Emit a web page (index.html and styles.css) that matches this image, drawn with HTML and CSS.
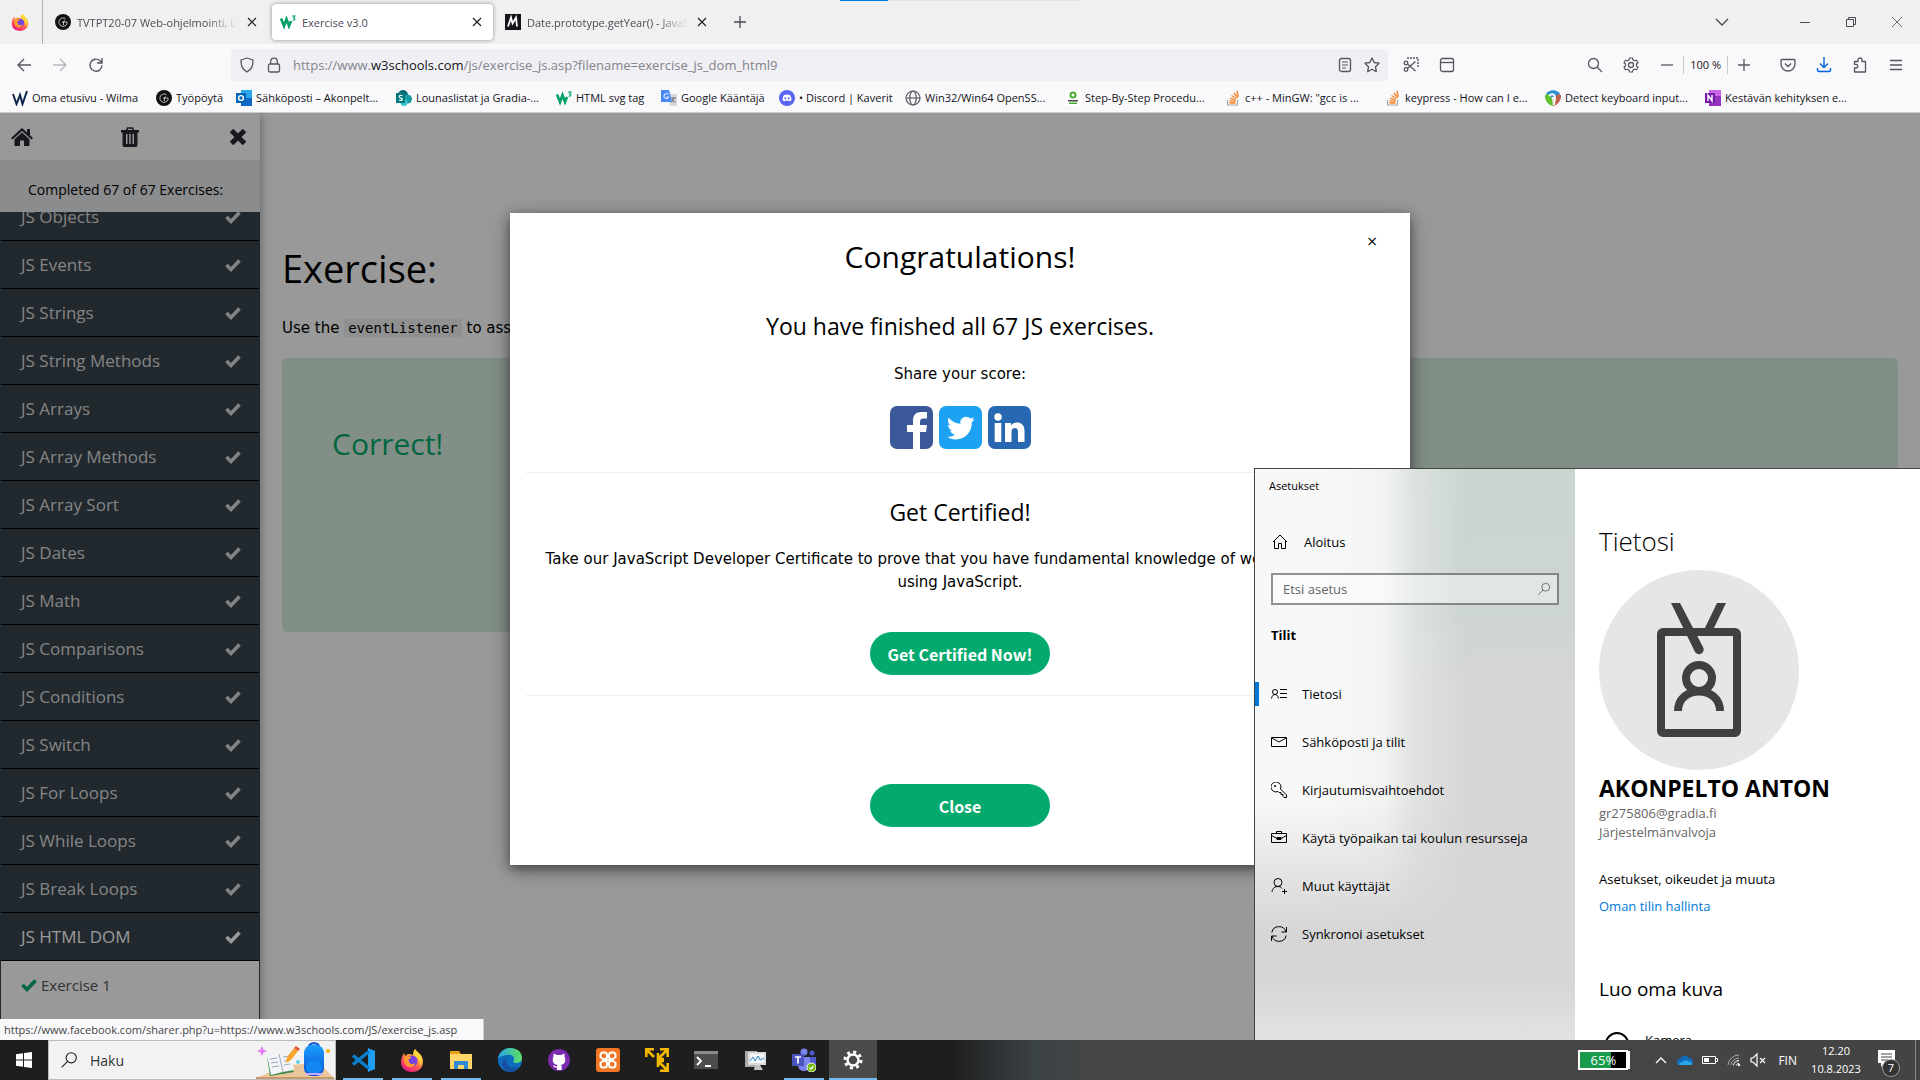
FILE: index.html
```html
<!DOCTYPE html>
<html lang="fi">
<head>
<meta charset="utf-8">
<meta name="viewport" content="width=device-width, initial-scale=1">
<title>Exercise v3.0</title>
<link rel="stylesheet" href="styles.css">
</head>
<body>
<svg class="sprite" aria-hidden="true">
  <defs>
    <linearGradient id="fx-body" x1="0.8" y1="0" x2="0.2" y2="1"><stop offset="0" stop-color="#fff044"/><stop offset=".35" stop-color="#ffa436"/><stop offset=".65" stop-color="#ff4f5e"/><stop offset="1" stop-color="#e31587"/></linearGradient>
    <linearGradient id="edge-a" x1="0" y1="0" x2="1" y2="0"><stop offset="0" stop-color="#2aa7e8"/><stop offset="1" stop-color="#5fe05f"/></linearGradient>
    <linearGradient id="bag" x1="0" y1="0" x2="0" y2="1"><stop offset="0" stop-color="#1aa0ff"/><stop offset="1" stop-color="#0b4fd0"/></linearGradient>
    <symbol id="firefox" viewBox="0 0 24 24">
      <path fill="url(#fx-body)" d="M15 1c1 2 5 4 7 8 3 7-1 15-10 15S-1 17 2 9c.6-2 1.500-3 2-4l1.500 3C6.500 6.500 8 6 9 6c2 0 3 1 4 1 0-2 .6-4 2-6Z"/>
      <circle cx="12" cy="13" r="5.500" fill="#7542e5"/>
      <path fill="#ff9a2b" d="M4 9c3-2 6-1 8 1-3 0-4 2-3 4s4 3 6 1c0 3-3 5-6 4-4-1-6-6-5-10Z"/>
      <path fill="#ffd93b" d="M15 1c1 3 5 5 6.500 9 .8 3 0 6-1.500 8 .5-5-2-8-5-10-1.500-2-1.500-5 0-7Z"/>
    </symbol>
    <symbol id="cursor-badge" viewBox="0 0 16 16"><circle cx="8" cy="8" r="8" fill="#111"/><path d="M10.500 4.700a4.200 4.200 0 1 0 1.500 5V8H8.500v3M10 6.500 7 8.500" fill="none" stroke="#bbb"/></symbol>
    <symbol id="w3" viewBox="0 0 16 16"><path d="m1 4.500 3 7.500 2.500-7L9 12l2-5" fill="none" stroke="#04a065" stroke-width="2.600"/><path d="M12 2h3l-1.500 2c2 0 1.800 2.500-.8 2.300" fill="none" stroke="#04a065" stroke-width="1.100"/></symbol>
    <symbol id="mdn" viewBox="0 0 16 16"><path fill="#15141a" d="M0 0h16v16H0z"/><path d="m3 12.500 3-9 1.500 6 3.500-6 1 9" fill="none" stroke="#fff" stroke-width="1.800"/></symbol>
    <symbol id="close" viewBox="0 0 16 16"><path d="m4 4 8 8m0-8-8 8" fill="none" stroke="currentColor" stroke-width="1.200"/></symbol>
    <symbol id="plus" viewBox="0 0 16 16"><path d="M8 2v12M2 8h12" fill="none" stroke="currentColor" stroke-width="1.300"/></symbol>
    <symbol id="minus" viewBox="0 0 16 16"><path d="M2 8h12" fill="none" stroke="currentColor" stroke-width="1.300"/></symbol>
    <symbol id="check" viewBox="0 0 16 16"><path d="m1.500 8 4.500 4.500 8.500-9" fill="none" stroke="currentColor" stroke-width="3.600"/></symbol>
    <symbol id="so" viewBox="0 0 16 16"><path d="M2.500 10v5h10v-5" fill="none" stroke="#a5a8ab" stroke-width="1.200"/><path d="M4.500 13h6M4.500 10.800l6 .6M5 8.300l5.800 1.500M6.500 5.500l5 3M9 3l3.700 4.600M12 1l1.200 5.500" stroke="#f48024" stroke-width="1.300"/></symbol>
    <symbol id="magnify" viewBox="0 0 16 16"><circle cx="10" cy="6" r="4.500" fill="none" stroke="currentColor"/><path d="m6.800 9.200-5.300 5.300" stroke="currentColor"/></symbol>
  </defs>
</svg>

<div class="desktop">
  <div class="browser">
    <div class="tabstrip">
      <div class="tabstrip__home"><svg class="i18"><use href="#firefox"/></svg></div>
      <div class="tab">
        <svg class="i16"><use href="#cursor-badge"/></svg>
        <span class="tab__title tab__title--fade">TVTPT20-07 Web-ohjelmointi, LV</span>
        <button class="icon-btn tab__close" aria-label="Sulje välilehti"><svg class="i16"><use href="#close"/></svg></button>
      </div>
      <div class="tab tab--active">
        <svg class="i16"><use href="#w3"/></svg>
        <span class="tab__title">Exercise v3.0</span>
        <button class="icon-btn tab__close" aria-label="Sulje välilehti"><svg class="i16"><use href="#close"/></svg></button>
      </div>
      <div class="tab">
        <svg class="i16"><use href="#mdn"/></svg>
        <span class="tab__title tab__title--fade">Date.prototype.getYear() - JavaScript</span>
        <button class="icon-btn tab__close" aria-label="Sulje välilehti"><svg class="i16"><use href="#close"/></svg></button>
      </div>
      <button class="icon-btn tabstrip__new" aria-label="Uusi välilehti"><svg class="i16"><use href="#plus"/></svg></button>
      <div class="window-controls">
        <button class="icon-btn window-controls__list" aria-label="Luettele välilehdet"><svg class="i16" viewBox="0 0 16 16"><path d="m2 5 6 6 6-6" fill="none" stroke="currentColor" stroke-width="1.400"/></svg></button>
        <button class="icon-btn" aria-label="Pienennä"><svg class="i16" viewBox="0 0 16 16"><path d="M3 8.500h10" stroke="currentColor"/></svg></button>
        <button class="icon-btn" aria-label="Palauta"><svg class="i16" viewBox="0 0 16 16"><path d="M3.500 5.500h7v7h-7zM5.500 5.500v-2h7v7h-2" fill="none" stroke="currentColor"/></svg></button>
        <button class="icon-btn" aria-label="Sulje"><svg class="i16" viewBox="0 0 16 16"><path d="m3 3 10 10m0-10L3 13" stroke="currentColor" stroke-width=".8"/></svg></button>
      </div>
      <div class="share-bar"><div class="share-bar__fill"></div></div>
    </div>

    <div class="toolbar">
      <div class="toolbar__nav">
        <button class="icon-btn" aria-label="Takaisin"><svg class="i16" viewBox="0 0 16 16"><path d="M15 8H2m6-6L2 8l6 6" fill="none" stroke="currentColor" stroke-width="1.400"/></svg></button>
        <button class="icon-btn is-disabled" aria-label="Eteenpäin" disabled><svg class="i16" viewBox="0 0 16 16"><path d="M1 8h13M8 2l6 6-6 6" fill="none" stroke="currentColor" stroke-width="1.400"/></svg></button>
        <button class="icon-btn" aria-label="Lataa uudelleen"><svg class="i16" viewBox="0 0 16 16"><path d="M14 8.500A6 6 0 1 1 12 3.700l1.500 1.500M14 1v5H9" fill="none" stroke="currentColor" stroke-width="1.400"/></svg></button>
      </div>
      <label class="urlbar">
        <svg class="i16" viewBox="0 0 16 16"><path d="M8 1 14 3c0 6-1 9-6 12C3 12 2 9 2 3Z" fill="none" stroke="currentColor" stroke-width="1.300" stroke-linejoin="round"/></svg>
        <svg class="i16" viewBox="0 0 16 16"><rect x="2.500" y="7" width="11" height="8" rx="1.500" fill="none" stroke="currentColor" stroke-width="1.300"/><path d="M4.700 7V4.500a3.300 3.300 0 0 1 6.600 0V7" fill="none" stroke="currentColor" stroke-width="1.300"/></svg>
        <span class="urlbar__text">https://www.<b>w3schools.com</b>/js/exercise_js.asp?filename=exercise_js_dom_html9</span>
        <svg class="i16" viewBox="0 0 16 16"><rect x="2.500" y="1.500" width="11" height="13" rx="2" fill="none" stroke="currentColor" stroke-width="1.300"/><path d="M5 5h6M5 8h6M5 11h4" stroke="currentColor"/></svg>
        <svg class="i16" viewBox="0 0 16 16"><path d="m8 1 2.200 4.500 4.800.7-3.500 3.500.8 5L8 12.300l-4.300 2.400.8-5L1 6.200l4.800-.7Z" fill="none" stroke="currentColor" stroke-width="1.300" stroke-linejoin="round"/></svg>
      </label>
      <div class="toolbar__mid">
        <button class="icon-btn" aria-label="Kuvakaappaus"><svg class="i16" viewBox="0 0 16 16"><path d="M4 1h11v10" fill="none" stroke="currentColor" stroke-width="1.400" stroke-dasharray="2 1"/><circle cx="3" cy="6" r="1.800" fill="none" stroke="currentColor" stroke-width="1.300"/><circle cx="3" cy="12.500" r="1.800" fill="none" stroke="currentColor" stroke-width="1.300"/><path d="m4.500 11.500 8-7m-8 2.500 8 7" stroke="currentColor" stroke-width="1.300"/></svg></button>
        <button class="icon-btn" aria-label="Sivupalkki"><svg class="i16" viewBox="0 0 16 16"><rect x="1.500" y="1.500" width="13" height="13" rx="2" fill="none" stroke="currentColor" stroke-width="1.300"/><path d="M2 5.500h12" stroke="currentColor" stroke-width="1.300"/></svg></button>
      </div>
      <div class="toolbar__end">
        <button class="icon-btn" aria-label="Haku"><svg class="i16" viewBox="0 0 16 16"><circle cx="6.500" cy="6.500" r="5" fill="none" stroke="currentColor" stroke-width="1.300"/><path d="m10 10 5 5" stroke="currentColor" stroke-width="1.300"/></svg></button>
        <button class="icon-btn" aria-label="Asetukset"><svg class="i16" viewBox="0 0 16 16"><circle cx="8" cy="8" r="2.500" fill="none" stroke="currentColor" stroke-width="1.300"/><path d="M6.500 1h3l.5 2 1.500.8 2-.6 1.500 2.500L13.500 7v2l1.500 1.300-1.500 2.500-2-.6L10 13l-.5 2h-3L6 13l-1.500-.8-2 .6L1 10.300 2.500 9V7L1 5.700l1.500-2.500 2 .6L6 3Z" fill="none" stroke="currentColor" stroke-width="1.200" stroke-linejoin="round"/></svg></button>
        <div class="zoom">
          <button class="icon-btn" aria-label="Loitonna"><svg class="i16"><use href="#minus"/></svg></button>
          <span class="zoom__value">100 %</span>
          <button class="icon-btn" aria-label="Lähennä"><svg class="i16"><use href="#plus"/></svg></button>
        </div>
        <button class="icon-btn" aria-label="Pocket"><svg class="i16" viewBox="0 0 16 16"><path d="M2 2.500h12a1 1 0 0 1 1 1V7A7 7 0 0 1 1 7V3.500a1 1 0 0 1 1-1Z" fill="none" stroke="currentColor" stroke-width="1.300"/><path d="m5 6.500 3 3 3-3" fill="none" stroke="currentColor" stroke-width="1.400"/></svg></button>
        <button class="icon-btn is-accent" aria-label="Lataukset"><svg class="i16" viewBox="0 0 16 16"><path d="M8 0v10M4 6.500l4 4 4-4M1.500 11v2a1.500 1.500 0 0 0 1.500 1.500h10a1.500 1.500 0 0 0 1.500-1.500v-2" fill="none" stroke="currentColor" stroke-width="1.400"/></svg></button>
        <button class="icon-btn" aria-label="Laajennukset"><svg class="i16" viewBox="0 0 16 16"><path d="M2.500 15v-4h1.500a1.800 1.800 0 0 0 0-3.600H2.500V4.500H6V3a2 2 0 0 1 4 0v1.500h3.500V15Z" fill="none" stroke="currentColor" stroke-width="1.300" stroke-linejoin="round"/></svg></button>
        <button class="icon-btn" aria-label="Valikko"><svg class="i16" viewBox="0 0 16 16"><path d="M2 3.500h12M2 8h12M2 12.500h12" stroke="currentColor" stroke-width="1.300"/></svg></button>
      </div>
    </div>

    <nav class="bookmarks">
      <a class="bookmark bookmark--wilma" href="#"><svg class="i16" viewBox="0 0 16 16"><path d="m1 4 3.500 10L8 5l2.500 9L15 1" fill="none" stroke="#10254e" stroke-width="2"/></svg>Oma etusivu - Wilma</a>
      <a class="bookmark bookmark--short" href="#"><svg class="i16"><use href="#cursor-badge"/></svg>Työpöytä</a>
      <a class="bookmark" href="#"><svg class="i16" viewBox="0 0 16 16"><path fill="#28a8ea" d="M5 0h11v10H5z"/><path fill="#1068c5" d="M5 8h11v8H5z"/><path fill="#0364b8" d="M0 3h10v10H0z"/><circle cx="5" cy="8" r="2.400" fill="none" stroke="#fff" stroke-width="1.400"/></svg>Sähköposti – Akonpelt...</a>
      <a class="bookmark" href="#"><svg class="i16" viewBox="0 0 16 16"><circle cx="7" cy="5" r="5" fill="#036c70"/><circle cx="11.500" cy="9" r="4.500" fill="#1a9ba1"/><circle cx="8" cy="12.500" r="3.500" fill="#37c6d0"/><path fill="#03787c" d="M0 3h9v10H0z"/><path d="M6.500 5.800C4.500 4.500 2.500 6 3.500 7.300c1 1 3 .7 2.800 2.200-.3 1.300-2.300 1.200-3.300.4" fill="none" stroke="#fff" stroke-width="1.200"/></svg>Lounaslistat ja Gradia-...</a>
      <a class="bookmark bookmark--tag" href="#"><svg class="i16"><use href="#w3"/></svg>HTML svg tag</a>
      <a class="bookmark bookmark--translate" href="#"><svg class="i16" viewBox="0 0 16 16"><path fill="#d5d7da" d="M7 4h9v12H9z"/><path fill="#4889f4" d="M0 0h8l3 12H0z"/><path d="M7.500 4.500a2.500 2.500 0 1 0 .3 2.500H5.500" fill="none" stroke="#fff"/><path d="M10.500 8H15m-2.200-1v1c0 2-1 3.500-2 4.500M11 8.500c.5 2 2 3.500 3.500 4" fill="none" stroke="#6d7277"/></svg>Google Kääntäjä</a>
      <a class="bookmark bookmark--discord" href="#"><svg class="i16" viewBox="0 0 16 16"><circle cx="8" cy="8" r="8" fill="#5865f2"/><path fill="#fff" d="M5 5c2-.8 4-.8 6 0 1 1.500 1.600 3.500 1.500 5.300-.8.600-1.500.9-2.300 1l-.5-.9a6 6 0 0 1-3.400 0l-.5.9c-.8-.1-1.500-.4-2.300-1C3.400 8.500 4 6.500 5 5Z"/><circle cx="6.300" cy="8.300" r="1" fill="#5865f2"/><circle cx="9.700" cy="8.300" r="1" fill="#5865f2"/></svg>• Discord | Kaverit</a>
      <a class="bookmark" href="#"><svg class="i16" viewBox="0 0 16 16"><g fill="none" stroke="#5b5b66" stroke-width="1.200"><circle cx="8" cy="8" r="7"/><ellipse cx="8" cy="8" rx="3.200" ry="7"/><path d="M1 8h14"/></g></svg>Win32/Win64 OpenSS...</a>
      <a class="bookmark" href="#"><svg class="i16" viewBox="0 0 16 16"><path fill="#fff" d="M0 0h16v16H0z"/><circle cx="8" cy="5" r="2.500" fill="none" stroke="#49ad33" stroke-width="2"/><path fill="#444" d="M3 10h10v1.500H3z"/><path fill="#49ad33" d="M4 12.500h8V14H4z"/></svg>Step-By-Step Procedu...</a>
      <a class="bookmark" href="#"><svg class="i16"><use href="#so"/></svg>c++ - MinGW: "gcc is ...</a>
      <a class="bookmark" href="#"><svg class="i16"><use href="#so"/></svg>keypress - How can I e...</a>
      <a class="bookmark" href="#"><svg class="i16" viewBox="0 0 16 16"><path fill="#2a8fd0" d="M1 4C4-1 12-1 15 4l-3 3H4Z"/><path fill="#5fc22d" d="M0 5c-.5 5 3 10 8 11L7 8 3 4Z"/><path fill="#c0604f" d="M16 5c.5 5-3 10-8 11l1-8 4-4Z"/><path d="M4 6c3-3 6-2 6 2l-1 7" fill="none" stroke="#fff" stroke-width="1.800"/></svg>Detect keyboard input...</a>
      <a class="bookmark" href="#"><svg class="i16" viewBox="0 0 16 16"><path fill="#ca64ea" d="M4 0h12v6H4z"/><path fill="#9332bf" d="M4 6h12v10H4z"/><path fill="#7719aa" d="M0 3h10v10H0z"/><path d="M3 11V5l4 6V5" fill="none" stroke="#fff" stroke-width="1.400"/></svg>Kestävän kehityksen e...</a>
    </nav>

    <div class="page">
      <aside class="sidebar">
        <div class="sidebar__head">
          <a href="#" aria-label="Home"><svg class="i22" viewBox="0 0 22 22"><path fill="currentColor" d="M11 2 0 12l1.500 1.500L11 5l9.500 8.500L22 12l-3-2.800V3h-3v3.500Z"/><path fill="currentColor" d="m11 6.500-7.500 6.700V20H9v-5.500h4V20h5.500v-6.800Z"/></svg></a>
          <button class="icon-btn" aria-label="Reset"><svg class="i22" viewBox="0 0 22 22"><path d="M7.500 4.500 8.500 2h5l1 2.500" fill="none" stroke="currentColor" stroke-width="1.600"/><path fill="currentColor" fill-rule="evenodd" d="M2 4h18v2.500h-1.500V19a2 2 0 0 1-2 2h-11a2 2 0 0 1-2-2V6.500H2Zm5 4v10h1.500V8Zm3.200 0v10h1.500V8Zm3.300 0v10H15V8Z"/></svg></button>
          <button class="icon-btn" aria-label="Close menu"><svg class="i22" viewBox="0 0 22 22"><path d="m4.500 4.500 13 13m0-13-13 13" stroke="currentColor" stroke-width="5"/></svg></button>
        </div>
        <p class="sidebar__progress">Completed 67 of 67 Exercises:</p>
        <ul class="topics">
          <li class="topic"><a href="#">JS Objects</a><svg class="i16"><use href="#check"/></svg></li>
          <li class="topic"><a href="#">JS Events</a><svg class="i16"><use href="#check"/></svg></li>
          <li class="topic"><a href="#">JS Strings</a><svg class="i16"><use href="#check"/></svg></li>
          <li class="topic"><a href="#">JS String Methods</a><svg class="i16"><use href="#check"/></svg></li>
          <li class="topic"><a href="#">JS Arrays</a><svg class="i16"><use href="#check"/></svg></li>
          <li class="topic"><a href="#">JS Array Methods</a><svg class="i16"><use href="#check"/></svg></li>
          <li class="topic"><a href="#">JS Array Sort</a><svg class="i16"><use href="#check"/></svg></li>
          <li class="topic"><a href="#">JS Dates</a><svg class="i16"><use href="#check"/></svg></li>
          <li class="topic"><a href="#">JS Math</a><svg class="i16"><use href="#check"/></svg></li>
          <li class="topic"><a href="#">JS Comparisons</a><svg class="i16"><use href="#check"/></svg></li>
          <li class="topic"><a href="#">JS Conditions</a><svg class="i16"><use href="#check"/></svg></li>
          <li class="topic"><a href="#">JS Switch</a><svg class="i16"><use href="#check"/></svg></li>
          <li class="topic"><a href="#">JS For Loops</a><svg class="i16"><use href="#check"/></svg></li>
          <li class="topic"><a href="#">JS While Loops</a><svg class="i16"><use href="#check"/></svg></li>
          <li class="topic"><a href="#">JS Break Loops</a><svg class="i16"><use href="#check"/></svg></li>
          <li class="topic topic--open"><a href="#">JS HTML DOM</a><svg class="i16"><use href="#check"/></svg></li>
          <li class="exercise"><svg class="i16"><use href="#check"/></svg><a href="#">Exercise 1</a></li>
        </ul>
      </aside>

      <main class="content">
        <h1>Exercise:</h1>
        <p class="content__task">Use the <code>eventListener</code> to assign</p>
        <div class="result"><h2>Correct!</h2></div>
      </main>

      <div class="overlay">
        <section class="modal" role="dialog" aria-labelledby="modal-title">
          <button class="modal__x" aria-label="Close dialog">×</button>
          <h2 id="modal-title">Congratulations!</h2>
          <h3>You have finished all 67 JS exercises.</h3>
          <p class="modal__share">Share your score:</p>
          <div class="modal__social">
            <a href="#" aria-label="Facebook"><svg viewBox="0 0 43 43"><rect width="43" height="43" rx="7" fill="#3b5998"/><path fill="#fff" d="M23 43V26h-6v-7h6v-4c0-6 3-9 8-9h6v6.500h-3.500c-2.500 0-3.500 1-3.500 3.500v3h7l-1 7h-6v17Z"/></svg></a>
            <a href="#" aria-label="Twitter"><svg viewBox="0 0 43 43"><rect width="43" height="43" rx="7" fill="#1da1f2"/><path fill="#fff" d="M35.500 13.300c-1 .5-2 .8-3.200.9 1.200-.7 2-1.800 2.500-3-1.100.6-2.300 1.100-3.600 1.400a5.700 5.700 0 0 0-9.700 5.200c-4.700-.2-8.900-2.500-11.700-6-1.500 2.600-.8 5.900 1.800 7.600-1 0-1.800-.3-2.600-.7 0 2.700 1.900 5.100 4.600 5.700-.8.200-1.700.2-2.600.1.700 2.300 2.800 3.900 5.300 4a11.500 11.500 0 0 1-8.400 2.300c2.500 1.600 5.500 2.600 8.700 2.600 10.600 0 16.600-9 16.200-17.200 1.100-.8 2-1.800 2.700-2.900Z"/></svg></a>
            <a href="#" aria-label="LinkedIn"><svg viewBox="0 0 43 43"><rect width="43" height="43" rx="7" fill="#2867b2"/><circle cx="10" cy="11" r="3.700" fill="#fff"/><path fill="#fff" d="M6.700 17h6.600v19H6.700ZM17 17h6v2.600c2.800-4.800 13.500-4.600 13.500 4.900V36H30V25.500c0-4.700-6.500-4.400-6.500 0V36H17Z"/></svg></a>
          </div>
          <hr>
          <h3 class="modal__cert">Get Certified!</h3>
          <p class="modal__text">Take our JavaScript Developer Certificate to prove that you have fundamental knowledge of web development using JavaScript.</p>
          <button class="pill">Get Certified Now!</button>
          <hr class="modal__rule">
          <button class="pill pill--close">Close</button>
        </section>
      </div>
      <div class="status">https://www.facebook.com/sharer.php?u=https://www.w3schools.com/JS/exercise_js.asp</div>
    </div>
  </div>

  <section class="settings" aria-label="Asetukset">
    <div class="settings__side">
      <p class="settings__app">Asetukset</p>
      <a class="settings__home" href="#"><svg class="i16" viewBox="0 0 16 16"><path d="M1 8 8 1l7 7M2.500 7v7.500h4v-5h3v5h4V7" fill="none" stroke="currentColor"/></svg>Aloitus</a>
      <div class="settings__search"><input type="search" aria-label="Etsi asetus" placeholder="Etsi asetus"><svg class="i14"><use href="#magnify"/></svg></div>
      <h2>Tilit</h2>
      <nav class="settings__nav">
        <a class="is-current" href="#"><svg class="i16" viewBox="0 0 16 16"><circle cx="4" cy="6" r="2.500" fill="none" stroke="currentColor"/><path d="M.5 12.500C1 9.500 2.500 8.500 4 8.500s3 1 3.500 4M9 3.500h7M9 7.500h7M9 11.500h7" fill="none" stroke="currentColor"/></svg>Tietosi</a>
        <a href="#"><svg class="i16" viewBox="0 0 16 16"><path d="M.5 3.500h15v9H.5ZM1 4l7 4 7-4" fill="none" stroke="currentColor"/></svg>Sähköposti ja tilit</a>
        <a href="#"><svg class="i16" viewBox="0 0 16 16"><path d="M9.500 7A5 5 0 1 0 7 9.500l1 1h2v2h2v2l1 1h2.500V13Z" fill="none" stroke="currentColor"/><circle cx="4" cy="4" r="1" fill="currentColor"/></svg>Kirjautumisvaihtoehdot</a>
        <a href="#"><svg class="i16" viewBox="0 0 16 16"><path d="M.5 3.500h15v9H.5ZM5.500 3.500v-2h5v2M.5 5.500 6 8.500h4l5.500-3M6 7.500h4v2H6Z" fill="none" stroke="currentColor"/></svg>Käytä työpaikan tai koulun resursseja</a>
        <a href="#"><svg class="i16" viewBox="0 0 16 16"><circle cx="7" cy="4.500" r="4" fill="none" stroke="currentColor"/><path d="M1 14c.5-4 3-5.500 6-5.500 2 0 3 .7 4 2M13.500 11v5M11 13.500h5" fill="none" stroke="currentColor"/></svg>Muut käyttäjät</a>
        <a href="#"><svg class="i16" viewBox="0 0 16 16"><path d="M.8 6.500A7.300 7.300 0 0 1 15 6M15.500 1v5h-5M15.200 9.500A7.300 7.300 0 0 1 1 10M.5 15v-5h5" fill="none" stroke="currentColor"/></svg>Synkronoi asetukset</a>
      </nav>
    </div>
    <div class="settings__main">
      <h1>Tietosi</h1>
      <svg class="avatar" viewBox="0 0 200 200"><circle cx="100" cy="100" r="100" fill="#e6e6e6"/><g fill="none" stroke="#404040" stroke-width="8"><rect x="62" y="62" width="76" height="101" rx="2"/><circle cx="100" cy="108" r="13"/><path d="M79 141c0-26 42-26 42 0"/></g><path fill="#404040" d="M72 33h9l23 44a4.500 4.500 0 0 1-8 5ZM118 33h9l-14 29h-9Z"/></svg>
      <p class="settings__name">AKONPELTO ANTON</p>
      <p class="settings__meta">gr275806@gradia.fi</p>
      <p class="settings__meta">Järjestelmänvalvoja</p>
      <p class="settings__note">Asetukset, oikeudet ja muuta</p>
      <a class="settings__link" href="#">Oman tilin hallinta</a>
      <h2>Luo oma kuva</h2>
      <button class="settings__camera"><svg class="i24" viewBox="0 0 24 24"><circle cx="12" cy="12" r="11" fill="none" stroke="#000" stroke-width="2"/></svg>Kamera</button>
    </div>
  </section>

  <footer class="taskbar">
    <button class="task task--start" aria-label="Käynnistä"><svg class="i16" viewBox="0 0 16 16"><path fill="#fff" d="M0 2.200 7 1.200v6.300H0ZM8 1l8-1v7.500H8ZM0 8.500h7v6.300l-7-1ZM8 8.500h8V16l-8-1Z"/></svg></button>
    <label class="tasksearch">
      <svg class="i18"><use href="#magnify"/></svg>
      <input type="text" aria-label="Haku" placeholder="Haku">
      <svg class="tasksearch__art" viewBox="0 0 80 38"><path fill="#e9c79b" d="M1 37 28 26q20-6 40 0l11 11Z"/><path fill="#c79a6b" d="M1 36h78v2H1Z"/><path fill="#3b8a4a" d="m15 35-3-20 4 12 20-2 3 6Z"/><path fill="#f2f4f8" d="m12 14 12-1 12-2 3 18-11 2-12 3Z"/><path d="m24 13 4 18M15 18l7-1M16 22l7-1M17 26l7-1M28 16l6-1M29 20l6-1M29 24l6-1" stroke="#9fa8b8" fill="none"/><path fill="#f7a62b" d="m32 16 7-9 4 3-7 9-5 3Z"/><path fill="#e5533d" d="m39 7 2-2 4 3-2 2Z"/><path d="M54 6c0-5 10-5 10 0" stroke="#0b4fd0" stroke-width="2" fill="none"/><rect x="49" y="4" width="20" height="31" rx="8" fill="url(#bag)"/><rect x="51" y="20" width="16" height="12" rx="5" fill="#1388f5"/><path d="M51 33h16" stroke="#c9a6ff" stroke-width="2"/><path fill="#e27df5" d="m7 5 1.500 3.500L12 10l-3.500 1.500L7 15l-1.500-3.500L2 10l3.500-1.500Z"/><circle cx="43" cy="21" r="2" fill="#5bd2f0"/><circle cx="73" cy="10" r="2" fill="#ffb300"/></svg>
    </label>
    <button class="task is-running" aria-label="Visual Studio Code"><svg class="i24" viewBox="0 0 24 24"><path fill="#1f9cf0" d="m17 0 7 3v18l-7 3Z"/><path d="M18 3.500 2 16.500M18 20.500 2 7.500" stroke="#0a7fcb" stroke-width="3.500"/></svg></button>
    <button class="task is-running" aria-label="Firefox"><svg class="i24"><use href="#firefox"/></svg></button>
    <button class="task is-running" aria-label="Resurssienhallinta"><svg class="i24" viewBox="0 0 24 24"><path fill="#e8a317" d="M1 3h9l2 3H1Z"/><path fill="#ffd667" d="M1 6h22v15H1Z"/><path fill="#2f8ad8" d="M5 21v-8h14v8h-4v-4H9v4Z"/></svg></button>
    <button class="task" aria-label="Edge"><svg class="i24" viewBox="0 0 24 24"><circle cx="12" cy="12" r="12" fill="#0f6cbd"/><path fill="url(#edge-a)" d="M0 11C2-4 24-3 24 10c0 5-6 6-9 4 3-4-1-8-5-7-5 0-9 2-10 4Z"/><path fill="#1a4fa0" d="M9 10c-3 6 3 12 12 9-5 7-16 6-17-3 0-3 2-5 5-6Z"/></svg></button>
    <button class="task" aria-label="GitHub Desktop"><svg class="i24" viewBox="0 0 24 24"><circle cx="12" cy="12" r="11" fill="#7a2bb0"/><path fill="#fff" d="M7 5.500 9.800 7h4.400L17 5.500c.7 1.200.8 2.200.5 3.200 2 3.300.6 7.500-3.500 8.300.7.800.8 2 .7 5H10v-2.500c-2.300.5-3.200-.6-4-2.300 1.500-.3 2 1.500 4 1 0-.5.100-.9.400-1.200-4.400-.8-5.700-5-3.900-8.300-.3-1-.2-2 .5-3.200Z"/></svg></button>
    <button class="task" aria-label="XAMPP"><svg class="i24" viewBox="0 0 24 24"><rect width="24" height="24" rx="3" fill="#f37623"/><path d="M4.500 8V7a2.500 2.500 0 0 1 2.500-2.500h1.500A2.500 2.500 0 0 1 11 7v2.500L8 12l3 2.500V17a2.500 2.500 0 0 1-2.500 2.500H7A2.500 2.500 0 0 1 4.500 17v-2L8 12 4.500 9ZM19.500 8V7A2.500 2.500 0 0 0 17 4.500h-1.500A2.500 2.500 0 0 0 13 7v2.500l3 2.500-3 2.500V17a2.500 2.500 0 0 0 2.500 2.500H17a2.500 2.500 0 0 0 2.500-2.500v-2L16 12l3.500-3ZM8 12h8" fill="none" stroke="#fff" stroke-width="2"/></svg></button>
    <button class="task" aria-label="VMware"><svg class="i24" viewBox="0 0 24 24"><g fill="none" stroke="#f5b800" stroke-width="2.600"><path d="M1.300 9V1.300H9M2 2l7 7M15 1.300h7.700V9M22 2l-8 8M22.700 15v7.700H15M22 22l-8-8M13 5v6h6M13 19v-6h6"/></g></svg></button>
    <button class="task" aria-label="Komentokehote"><svg class="i24" viewBox="0 0 24 24"><path fill="#4d4d4d" d="M0 3h24v18H0z"/><path fill="#8a8a8a" d="M0 3h24v3H0z"/><path d="m3 9 4 4-4 4m8 1h6" fill="none" stroke="#fff" stroke-width="1.800"/></svg></button>
    <button class="task" aria-label="Resurssienvalvonta"><svg class="i24" viewBox="0 0 24 24"><path fill="#a9a9a9" d="M2 3h12v16H2z"/><path fill="#dcdcdc" d="M5 4h18v13H5z"/><path fill="#f4f8fb" d="M7 6h14v9H7z"/><path d="m7 13 3-4 2 4 3-5 2 4 4-2" fill="none" stroke="#2d83c5"/><path fill="#c4c4c4" d="M12 17h5l3 5h-9Z"/></svg></button>
    <button class="task is-running" aria-label="Teams"><svg class="i24" viewBox="0 0 24 24"><circle cx="12" cy="4" r="3.500" fill="#7b83eb"/><circle cx="20" cy="5" r="2.500" fill="#5059c9"/><path fill="#5059c9" d="M15 9h9v7c0 4-6 5-8 1Z"/><path fill="#7b83eb" d="M6 9h12v8c0 8-12 8-12 0Z"/><path fill="#4b53bc" d="M0 6h12v12H0z"/><path d="M3 9h6M6 9v6.500" stroke="#fff" stroke-width="1.700"/><circle cx="19.500" cy="19.500" r="4.500" fill="#6bb700" stroke="#fff"/><path d="m17.500 19.500 1.500 1.500 2.500-3" fill="none" stroke="#fff" stroke-width="1.300"/></svg></button>
    <button class="task is-running is-focused" aria-label="Asetukset"><svg class="i20" viewBox="0 0 20 20"><circle cx="10" cy="10" r="5.500" fill="none" stroke="#fff" stroke-width="2.500"/><circle cx="10" cy="10" r="8" fill="none" stroke="#fff" stroke-width="3" stroke-dasharray="3 3.280"/></svg></button>
    <div class="tray">
      <div class="meter"><span>65%</span></div>
      <svg class="i14 tray__chevron" viewBox="0 0 14 14"><path d="m2 10 5-5 5 5" fill="none" stroke="#fff" stroke-width="1.300"/></svg>
      <svg class="i16" viewBox="0 0 16 16"><path fill="#0f6cbd" d="M3 7a5 5 0 0 1 9-1 4 4 0 0 1 4 4l-3 3H3a3 3 0 0 1 0-6Z"/><path fill="#28a8ea" d="m1 12 8-4 6.500 3c0 1-1 2-2 2H3Z"/></svg>
      <svg class="i16" viewBox="0 0 16 16"><path d="M.5 4.500h13v7H.5ZM14 6.500h1.500v3H14" fill="none" stroke="#fff"/><path fill="#fff" d="M2 6h5v4H2z"/></svg>
      <svg class="i14" viewBox="0 0 14 14"><g fill="none"><path d="M1 12A11 11 0 0 1 12 2M4 12a8 8 0 0 1 8-7" stroke="#aaa"/><path d="M6.500 12.500a6 6 0 0 1 5.500-5M9.500 12.500a3 3 0 0 1 2.500-2.500" stroke="#fff"/></g><circle cx="12" cy="12" r="1.200" fill="#fff"/></svg>
      <svg class="i16" viewBox="0 0 16 16"><path d="M1 6h2l4-4v12l-4-4H1ZM10 6l5 5m0-5-5 5" fill="none" stroke="#fff" stroke-width="1.200"/></svg>
      <span class="tray__lang">FIN</span>
      <div class="tray__clock"><span>12.20</span><span>10.8.2023</span></div>
      <div class="tray__notes"><svg class="i20" viewBox="0 0 20 20"><path fill="#fff" d="M1 2h17v13H8l-4 4v-4H1Z"/><path d="M4 6h11M4 9h11M4 12h7" stroke="#444"/></svg><span class="tray__badge">7</span></div>
    </div>
  </footer>
</div>
</body>
</html>
```
FILE: styles.css
```css
* { box-sizing: border-box; }

body, h1, h2, h3, p, ul { margin: 0; padding: 0; }

body {
  font-family: "Open Sans", "Noto Sans", sans-serif;
  font-size: 12px;
  color: #000;
}

a { color: inherit; text-decoration: none; }
button, input { font: inherit; color: inherit; border: 0; background: none; padding: 0; }
ul { list-style: none; }
svg { display: block; flex: none; }

.sprite { position: absolute; width: 0; height: 0; }
.i14 { width: 14px; height: 14px; }
.i16 { width: 16px; height: 16px; }
.i18 { width: 18px; height: 18px; }
.i20 { width: 20px; height: 20px; }
.i22 { width: 22px; height: 22px; }
.i24 { width: 24px; height: 24px; }

.icon-btn { display: flex; align-items: center; justify-content: center; }
.is-disabled { opacity: .4; }
.is-accent { color: #0561e0; }

.desktop {
  position: relative;
  display: flex;
  flex-direction: column;
  height: 100vh;
  overflow: hidden;
}

.browser { flex: 1; min-height: 0; display: flex; flex-direction: column; }

/* Tabs */
.tabstrip {
  position: relative;
  display: flex;
  align-items: center;
  height: 44px;
  background: #f0f0f0;
  color: #4a4a55;
}
.tabstrip__home {
  display: flex;
  align-items: center;
  align-self: stretch;
  padding: 0 13px 0 11px;
  border-right: 1px solid #b0b0b0;
}
.tab {
  display: flex;
  align-items: center;
  gap: 6px;
  width: 221px;
  height: 36px;
  margin-left: 4px;
  padding: 0 8px;
  border-radius: 4px;
  font-size: 11px;
}
.tab--active { background: #fff; box-shadow: 0 0 4px rgba(0, 0, 0, .4); }
.tab__title { flex: 1; min-width: 0; overflow: hidden; white-space: nowrap; }
.tab__title--fade { mask-image: linear-gradient(to right, #000 80%, transparent); }
.tab__close { color: #222; }
.tabstrip__new { margin-left: 14px; }
.window-controls { display: flex; gap: 30px; margin-left: auto; padding-right: 15px; }
.window-controls__list { margin-right: 37px; }
.share-bar { position: absolute; top: 0; left: 840px; width: 241px; height: 1px; background: #e3e3e3; }
.share-bar__fill { width: 48px; height: 1px; background: #0078d7; }

/* Navigation toolbar */
.toolbar {
  display: flex;
  align-items: center;
  height: 41px;
  padding: 0 16px;
  background: #f9f9fb;
  color: #55555f;
}
.toolbar__nav { display: flex; gap: 20px; width: 215px; }
.urlbar {
  flex: 1;
  display: flex;
  align-items: center;
  gap: 11px;
  height: 32px;
  padding: 0 8px;
  border-radius: 4px;
  background: #f0f0f4;
}
.urlbar__text { flex: 1; font-size: 13px; color: #83838c; white-space: nowrap; }
.urlbar__text b { font-weight: 400; color: #15141a; }
.toolbar__mid { display: flex; gap: 20px; padding-left: 15px; }
.toolbar__end { display: flex; gap: 20px; margin-left: 132px; }
.zoom { display: flex; align-items: center; gap: 8px; margin-right: 8px; }
.zoom__value {
  padding: 0 6px;
  border: solid #c8c8cc;
  border-width: 0 1px;
  font-size: 11px;
  line-height: 18px;
  color: #15141a;
}

/* Bookmarks */
.bookmarks {
  display: flex;
  height: 28px;
  padding: 0 0 2px 12px;
  border-bottom: 1px solid #ccc;
  background: #f9f9fb;
  color: #15141a;
  font-size: 11px;
}
.bookmark { display: flex; align-items: center; gap: 4px; width: 160px; flex: none; white-space: nowrap; overflow: hidden; }
.bookmark--wilma { width: 144px; }
.bookmark--short { width: 80px; }
.bookmark--tag { width: 105px; }
.bookmark--translate { width: 118px; }
.bookmark--discord { width: 126px; }

/* Web page */
.page { position: relative; flex: 1; min-height: 0; display: flex; overflow: hidden; background: #fff; }

.sidebar {
  position: relative;
  z-index: 1;
  flex: none;
  width: 260px;
  display: flex;
  flex-direction: column;
  background: #fff;
  box-shadow: 0 2px 10px rgba(0, 0, 0, .4);
}
.sidebar__head {
  position: relative;
  z-index: 1;
  display: flex;
  align-items: center;
  justify-content: space-between;
  height: 47px;
  padding: 0 11px;
  background: #fff;
  color: #282a35;
}
.sidebar__progress {
  position: relative;
  z-index: 1;
  height: 52px;
  padding: 0 28px;
  background: #e7e9eb;
  font-size: 14px;
  line-height: 60px;
  white-space: nowrap;
}
/* The list is scrolled part of a row under the header. */
.topics { margin-top: -19px; border: solid #38444d; border-width: 0 1px; flex: 1; }
.topic {
  display: flex;
  align-items: center;
  justify-content: space-between;
  height: 48px;
  padding: 0 18px 0 20px;
  border-bottom: 1px solid #000;
  background: #38444d;
  color: #ddd;
  font-size: 17px;
}
.topic--open { color: #fff; }
.exercise { display: flex; align-items: center; gap: 4px; height: 48px; padding-left: 20px; color: #555; font-size: 15px; }
.exercise svg { color: #04aa6d; }

.content { flex: 1; min-width: 0; padding: 125px 22px 0; }
.content h1 { font-size: 38px; font-weight: 400; line-height: 60px; }
.content__task { margin-top: 18px; font: 15px/24px "DejaVu Sans", sans-serif; }
.content__task code { padding: 1px 4px; background: #f1f1f1; font: 14px "DejaVu Sans Mono", monospace; }
.result { height: 274px; margin-top: 18px; padding: 63px 50px; border-radius: 5px; background: #d9eee1; }
.result h2 { font-size: 30px; font-weight: 400; line-height: 46px; color: #04aa6d; }

.overlay {
  position: absolute;
  inset: 0;
  z-index: 2;
  padding-top: 100px;
  background: rgba(0, 0, 0, .4);
}
.modal {
  position: relative;
  display: flex;
  flex-direction: column;
  align-items: center;
  width: 900px;
  margin: 0 auto;
  padding: 16px 16px 38px;
  background: #fff;
  box-shadow: 0 4px 10px rgba(0, 0, 0, .4), 0 4px 20px rgba(0, 0, 0, .3);
  text-align: center;
}
.modal__x { position: absolute; top: 18px; right: 32px; font: 14px/20px "DejaVu Sans", sans-serif; }
.modal h2 { font-size: 30px; font-weight: 400; line-height: 56px; }
.modal h3 { margin-top: 21px; font-size: 23px; font-weight: 400; line-height: 40px; }
.modal h3.modal__cert { margin-top: 19px; }
.modal__share { margin-top: 16px; font: 15px/24px "DejaVu Sans", sans-serif; }
.modal__social { display: flex; gap: 6px; margin-top: 20px; }
.modal__social svg { width: 43px; height: 43px; }
.modal hr { width: 100%; margin: 23px 0 0; border: 0; border-top: 1px solid #eee; }
.modal hr.modal__rule { margin-top: 20px; }
.modal__text { margin: 16px 0 38px; font: 15px/23px "DejaVu Sans", sans-serif; }
.pill {
  width: 180px;
  height: 43px;
  border-radius: 25px;
  background: #04aa6d;
  color: #fff;
  font: bold 16px "Noto Sans CJK JP", sans-serif;
}
.pill--close { margin-top: 88px; }

.status {
  position: absolute;
  left: 0;
  bottom: 0;
  z-index: 3;
  min-width: 484px;
  padding: 0 4px;
  border-right: 1px solid #ccc;
  background: #f9f9fb;
  color: #444;
  font-size: 11px;
  line-height: 21px;
}

/* Settings window */
.settings {
  position: absolute;
  z-index: 4;
  left: 1254px;
  right: 0;
  top: 468px;
  bottom: 40px;
  display: flex;
  overflow: hidden;
  border: solid #444;
  border-width: 1px 0 0 1px;
  background: #fff;
  font-size: 13px;
}
.settings__side {
  position: relative;
  flex: none;
  width: 320px;
  background: linear-gradient(to bottom, #cbd5cf 0, #cdd5d0 140px, #d6d6d6 220px, #d6d6d6 90%, #e2e2e2 100%);
}
.settings__side::before {
  content: "";
  position: absolute;
  inset: 0;
  background: linear-gradient(to right, #f8f8f8 20%, #f2f4f3 40%, rgba(236, 240, 238, .5) 50%, rgba(230, 235, 232, 0) 66%);
  mask-image: linear-gradient(to bottom, #000 330px, transparent 460px);
}
.settings__side > * { position: relative; }
.settings__app { padding: 8px 14px; font-size: 11px; line-height: 18px; }
.settings__home { display: flex; align-items: center; gap: 16px; height: 40px; margin-top: 19px; padding-left: 17px; }
.settings__search {
  display: flex;
  align-items: center;
  height: 32px;
  margin: 11px 16px 0;
  padding: 0 6px 0 10px;
  border: 2px solid rgba(0, 0, 0, .42);
  background: rgba(255, 255, 255, .4);
  color: #666;
}
.settings__search input { flex: 1; min-width: 0; outline: 0; }
.settings__search input::placeholder { color: #666; opacity: 1; }
.settings__side h2 { padding: 0 16px; margin-top: 18px; font-size: 13px; line-height: 24px; }
.settings__nav { margin-top: 23px; }
.settings__nav a { display: flex; align-items: center; gap: 15px; height: 48px; padding-left: 16px; }
.settings__nav .is-current { background: linear-gradient(#0078d7, #0078d7) 0 50% / 4px 24px no-repeat; }

.settings__main { flex: 1; min-width: 0; padding: 48px 24px 0; white-space: nowrap; }
.settings__main h1 { font-size: 26px; font-weight: 300; line-height: 48px; }
.avatar { width: 200px; height: 200px; margin-top: 5px; }
.settings__name { font-size: 23px; font-weight: 700; line-height: 36px; }
.settings__meta { color: #666; line-height: 19px; }
.settings__name + .settings__meta { margin-top: -2px; }
.settings__note { margin-top: 27px; line-height: 20px; }
.settings__link { display: block; margin-top: 7px; line-height: 20px; color: #0078d7; }
.settings__main h2 { margin-top: 58px; font-size: 19px; font-weight: 400; line-height: 30px; }
.settings__camera { display: flex; gap: 16px; margin-top: 28px; padding-left: 6px; line-height: 16px; }

/* Taskbar */
.taskbar {
  display: flex;
  flex: none;
  height: 40px;
  background: linear-gradient(to right, #1e1e1e 950px, #3b4245 1035px, #464646 1100px, #444 100%);
  color: #fff;
}
.task {
  display: flex;
  align-items: center;
  justify-content: center;
  width: 48px;
  margin-right: 1px;
}
.task--start { margin: 0; }
.is-running { background: linear-gradient(#76b9ed, #76b9ed) 50% 100% / 40px 2px no-repeat; }
.is-focused { background: linear-gradient(#76b9ed, #76b9ed) 50% 100% / 100% 2px no-repeat #4a4a4a; }
.tasksearch {
  display: flex;
  align-items: center;
  gap: 12px;
  width: 288px;
  margin-right: 3px;
  padding-left: 11px;
  border: 1px solid #bbb;
  background: #f2f2f2;
  color: #222;
  font-size: 14px;
}
.tasksearch input { flex: 1; min-width: 0; outline: 0; }
.tasksearch input::placeholder { color: #333; opacity: 1; }
.tasksearch__art { width: 80px; height: 38px; }

.tray { display: flex; align-items: center; gap: 9px; margin-left: auto; padding-right: 4px; }
.meter {
  width: 50px;
  height: 20px;
  margin-right: 17px;
  border: 2px solid #fff;
  background: linear-gradient(to right, #179b4a 68%, #000 68%);
  box-shadow: 3px 0 0 -1px #fff;
  font-size: 13px;
  line-height: 16px;
  text-align: center;
}
.tray__lang { padding-left: 3px; }
.tray__clock { display: flex; flex-direction: column; width: 60px; text-align: center; line-height: 18px; font-size: 11px; }
.tray__notes { position: relative; display: flex; align-items: center; height: 40px; padding: 0 18px 4px 2px; border-right: 1px solid #888; }
.tray__badge {
  position: absolute;
  right: 16px;
  bottom: 4px;
  width: 16px;
  height: 16px;
  border-radius: 50%;
  background: #333;
  box-shadow: 0 0 0 1px #999;
  font-size: 11px;
  line-height: 16px;
  text-align: center;
}
```
